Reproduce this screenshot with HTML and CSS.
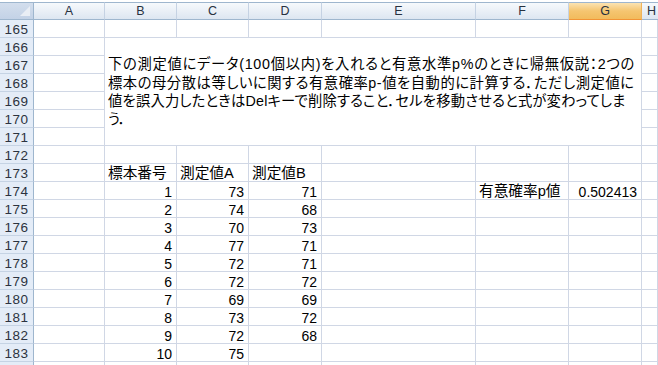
FILE: index.html
```html
<!DOCTYPE html>
<html>
<head>
    <title>Book1 - 有意確率p値</title>
    <link rel="stylesheet" href="styles.css">
</head>
<body>
    <div class="sheet">
        <div class="corner"></div>
        <div class="ch">A</div><div class="ch">B</div><div class="ch">C</div><div class="ch">D</div>
        <div class="ch">E</div><div class="ch">F</div><div class="ch sel">G</div><div class="ch last">H</div>

        <div class="rh">165</div><div class="c"></div><div class="c"></div><div class="c"></div><div class="c"></div><div class="c"></div><div class="c"></div><div class="c"></div><div class="c"></div>
        <div class="rh">166</div><div class="c"></div>
        <div class="note">
            <span class="line l1">下の測定値にデータ(100個以内)を入れると有意水準p%のときに帰無仮説：2つの</span>
            <span class="line l2">標本の母分散は等しいに関する有意確率p-値を自動的に計算する．ただし測定値に</span>
            <span class="line l3">値を誤入力したときはDelキーで削除すること．セルを移動させると式が変わってしま</span>
            <span class="line">う．</span>
        </div>
        <div class="c"></div>
        <div class="rh">167</div><div class="c"></div><div class="c"></div>
        <div class="rh">168</div><div class="c"></div><div class="c"></div>
        <div class="rh">169</div><div class="c"></div><div class="c"></div>
        <div class="rh">170</div><div class="c"></div><div class="c"></div>
        <div class="rh">171</div><div class="c"></div><div class="c"></div>
        <div class="rh">172</div><div class="c"></div><div class="c"></div><div class="c"></div><div class="c"></div><div class="c"></div><div class="c"></div><div class="c"></div><div class="c"></div>
        <div class="rh">173</div><div class="c"></div><div class="c">標本番号</div><div class="c">測定値A</div><div class="c">測定値B</div><div class="c"></div><div class="c"></div><div class="c"></div><div class="c"></div>
        <div class="rh">174</div><div class="c"></div><div class="c n">1</div><div class="c n">73</div><div class="c n">71</div><div class="c"></div><div class="c">有意確率p値</div><div class="c n">0.502413</div><div class="c"></div>
        <div class="rh">175</div><div class="c"></div><div class="c n">2</div><div class="c n">74</div><div class="c n">68</div><div class="c"></div><div class="c"></div><div class="c"></div><div class="c"></div>
        <div class="rh">176</div><div class="c"></div><div class="c n">3</div><div class="c n">70</div><div class="c n">73</div><div class="c"></div><div class="c"></div><div class="c"></div><div class="c"></div>
        <div class="rh">177</div><div class="c"></div><div class="c n">4</div><div class="c n">77</div><div class="c n">71</div><div class="c"></div><div class="c"></div><div class="c"></div><div class="c"></div>
        <div class="rh">178</div><div class="c"></div><div class="c n">5</div><div class="c n">72</div><div class="c n">71</div><div class="c"></div><div class="c"></div><div class="c"></div><div class="c"></div>
        <div class="rh">179</div><div class="c"></div><div class="c n">6</div><div class="c n">72</div><div class="c n">72</div><div class="c"></div><div class="c"></div><div class="c"></div><div class="c"></div>
        <div class="rh">180</div><div class="c"></div><div class="c n">7</div><div class="c n">69</div><div class="c n">69</div><div class="c"></div><div class="c"></div><div class="c"></div><div class="c"></div>
        <div class="rh">181</div><div class="c"></div><div class="c n">8</div><div class="c n">73</div><div class="c n">72</div><div class="c"></div><div class="c"></div><div class="c"></div><div class="c"></div>
        <div class="rh">182</div><div class="c"></div><div class="c n">9</div><div class="c n">72</div><div class="c n">68</div><div class="c"></div><div class="c"></div><div class="c"></div><div class="c"></div>
        <div class="rh">183</div><div class="c"></div><div class="c n">10</div><div class="c n">75</div><div class="c"></div><div class="c"></div><div class="c"></div><div class="c"></div><div class="c"></div>
        <div class="rh"></div><div class="c"></div><div class="c"></div><div class="c"></div><div class="c"></div><div class="c"></div><div class="c"></div><div class="c"></div><div class="c"></div>
    </div>
</body>
</html>
```

FILE: styles.css
```css
body {
    margin: 0;
    padding: 0;
    background-color: #ffffff;
    font-family: "Liberation Sans", "Noto Sans CJK JP", sans-serif;
    font-size: 14.67px;
    font-feature-settings: "palt";
    color: #000;
    overflow: hidden;
}
.sheet {
    display: grid;
    grid-template-columns: 34px 71px 72px 72px 73px 154px 93px 73px 1fr;
    grid-template-rows: 18px;
    grid-auto-rows: 18px;
    padding-top: 2px;
    height: 363px;
    overflow: hidden;
}
.corner {
    background: linear-gradient(#d3deed, #c3d2e6);
    border-top: 1px solid #9eb6ce;
    border-right: 1px solid #9eb6ce;
    border-bottom: 1px solid #9eb6ce;
    position: relative;
}
.corner::after {
    content: "";
    position: absolute;
    right: 3px;
    bottom: 3px;
    border-style: solid;
    border-width: 0 0 10px 10px;
    border-color: transparent transparent #e9eef5 transparent;
}
.ch {
    background: linear-gradient(#f6f9fc, #dde6f1);
    border-top: 1px solid #9eb6ce;
    border-right: 1px solid #c5d2e3;
    border-bottom: 1px solid #9eb6ce;
    text-align: center;
    padding-top: 2px;
    line-height: 13px;
    color: #27313f;
    font-size: 12.5px;
}
.ch.sel {
    background: linear-gradient(#fbe3b2, #f5c570 50%, #f2bb5c);
    border-bottom-color: #f29436;
    border-right-color: #f0b35a;
}
.ch.last {
    border-right: none;
    text-align: left;
    padding-left: 5px;
}
.rh {
    background-color: #e4ecf7;
    border-right: 1px solid #9eb6ce;
    border-bottom: 1px solid #c5d3e4;
    text-align: center;
    padding-top: 3px;
    line-height: 14px;
    color: #2c3340;
    font-size: 13.5px;
    letter-spacing: 0.5px;
}
.c {
    border-right: 1px solid #d0d7e5;
    border-bottom: 1px solid #d0d7e5;
    padding: 2px 3px 0;
    line-height: 15px;
    white-space: nowrap;
}
.c.n {
    text-align: right;
    padding-top: 3px;
    padding-right: 4px;
    font-size: 14px;
    line-height: 14px;
}
.note {
    grid-column: span 6;
    grid-row: span 6;
    border-right: 1px solid #d0d7e5;
    border-bottom: 1px solid #d0d7e5;
    padding: 1px 3px 0;
    display: flex;
    flex-direction: column;
    justify-content: center;
    line-height: 18.3px;
    white-space: nowrap;
    font-size: 14.3px;
}
.note .l1 {
    letter-spacing: 0.72px;
}
.note .l2 {
    letter-spacing: 0.55px;
}
.note .l3 {
    letter-spacing: 0.2px;
}
```
